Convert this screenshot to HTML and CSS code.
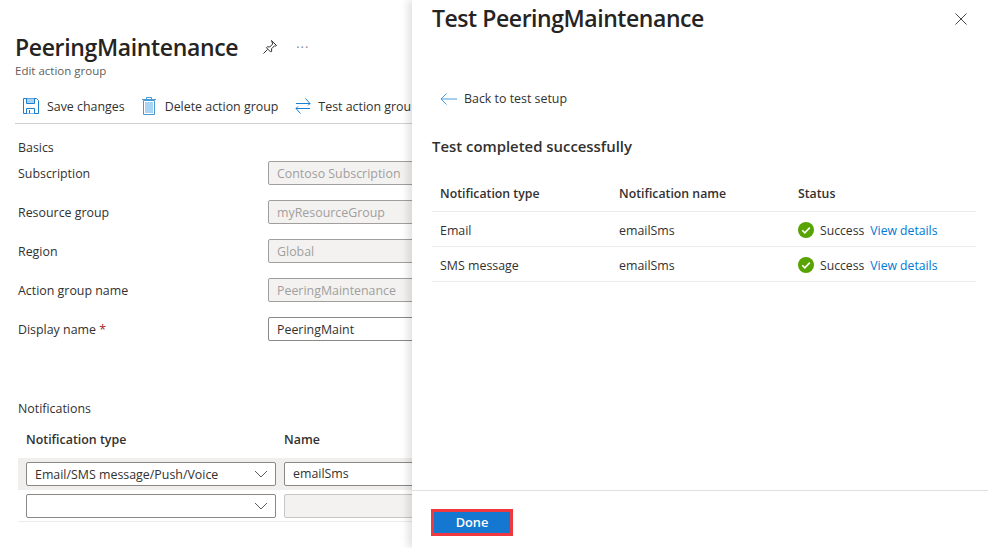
FILE: index.html
```html
<!DOCTYPE html>
<html lang="en">
<head>
  <meta charset="UTF-8" />
  <title>PeeringMaintenance</title>
  <link rel="stylesheet" href="styles.css">
</head>
<body>

<div class="blade">
  <div class="title-row">
    <h1>PeeringMaintenance</h1>
    <svg class="pin" width="16" height="16" viewBox="0 0 16 16" fill="none" stroke="#323130" stroke-width="1"><path d="M9.5 1.5l5 5-1 .6-1-.3-3 3 .2 2.4-.9.9-2.2-2.2-2.2-2.2.9-.9 2.4.2 3-3-.3-1z"/><path d="M5.5 10.500l-4 4"/></svg>
    <span class="more">···</span>
  </div>
  <div class="subtitle">Edit action group</div>

  <div class="toolbar">
    <span class="tool">
      <svg width="16" height="16" viewBox="0 0 16 16" fill="none" stroke="#1a7fd0" stroke-width="1"><path d="M.5.5h13l2 2v13H.5z"/><path d="M3.5.5v5h8v-5" fill="#a9d3f2"/><path d="M3.5 15.5v-5h8v5" fill="#fff"/><path d="M6.500 12v3.500"/></svg>
      Save changes
    </span>
    <span class="tool">
      <svg width="16" height="18" viewBox="0 0 16 18" fill="none" stroke="#4a9ad8" stroke-width="1"><path d="M2.500 3.500h11v14h-11z"/><path d="M4 5h8v11H4z" fill="#a9d3f2" stroke="none"/><path d="M1 2.500h14M5.500 2.500v-2h5v2"/></svg>
      Delete action group
    </span>
    <span class="tool tight">
      <svg width="16" height="16" viewBox="0 0 16 16" fill="none" stroke="#1a7fd0" stroke-width="1"><path d="M1 5.500h14M10.500 .5l4.500 5-2 2M15 10.500H1M5.500 15.500L1 10.500l2-2"/></svg>
      Test action group
    </span>
  </div>

  <div class="form">
    <h2 class="section">Basics</h2>
    <div class="field"><label>Subscription</label><div class="input off">Contoso Subscription</div></div>
    <div class="field"><label>Resource group</label><div class="input off">myResourceGroup</div></div>
    <div class="field"><label>Region</label><div class="input off">Global</div></div>
    <div class="field"><label>Action group name</label><div class="input off">PeeringMaintenance</div></div>
    <div class="field"><label>Display name <span class="req">*</span></label><div class="input">PeeringMaint</div></div>

    <h2 class="section notif">Notifications</h2>
    <div class="notif-head"><span>Notification type</span><span>Name</span></div>
    <div class="notif-row shaded">
      <div class="select">Email/SMS message/Push/Voice
        <svg width="14" height="8" viewBox="0 0 14 8" fill="none" stroke="#605e5c"><path d="M1 1l6 6 6-6"/></svg>
      </div>
      <div class="input wide">emailSms</div>
    </div>
    <div class="notif-row last">
      <div class="select">
        <svg width="14" height="8" viewBox="0 0 14 8" fill="none" stroke="#605e5c"><path d="M1 1l6 6 6-6"/></svg>
      </div>
      <div class="input wide blank"></div>
    </div>
  </div>
</div>

<div class="panel">
  <div class="panel-top">
    <h2>Test PeeringMaintenance</h2>
    <svg class="close" width="12" height="12" viewBox="0 0 12 12" fill="none" stroke="#484644"><path d="M.5.500l11 11M11.500.500l-11 11"/></svg>
  </div>

  <div class="panel-body">
    <div class="back">
      <svg width="17" height="12" viewBox="0 0 17 12" fill="none" stroke="#4a9ad8"><path d="M1 6h16M6.500.500L1 6l5.500 5.500"/></svg>
      Back to test setup
    </div>
    <h3>Test completed successfully</h3>

    <table>
      <thead>
        <tr><th>Notification type</th><th>Notification name</th><th>Status</th></tr>
      </thead>
      <tbody>
        <tr>
          <td>Email</td><td>emailSms</td>
          <td>
            <span class="status">
              <svg width="16" height="16" viewBox="0 0 16 16"><circle cx="8" cy="8" r="8" fill="#57a300"/><path d="M4.200 8.300l2.600 2.600 5-5.300" fill="none" stroke="#fff" stroke-width="1.600"/></svg>
              Success <a>View details</a>
            </span>
          </td>
        </tr>
        <tr>
          <td>SMS message</td><td>emailSms</td>
          <td>
            <span class="status">
              <svg width="16" height="16" viewBox="0 0 16 16"><circle cx="8" cy="8" r="8" fill="#57a300"/><path d="M4.200 8.300l2.600 2.600 5-5.300" fill="none" stroke="#fff" stroke-width="1.600"/></svg>
              Success <a>View details</a>
            </span>
          </td>
        </tr>
      </tbody>
    </table>
  </div>

  <div class="panel-foot">
    <button class="done">Done</button>
  </div>
</div>

</body>
</html>
```

FILE: styles.css
```css
html, body {
  height: 100%;
}

body {
  margin: 0;
  width: 988px;
  height: 548px;
  overflow: hidden;
  position: relative;
  background: #fff;
  color: #323130;
  font-family: "Open Sans", Arial, sans-serif;
  font-size: 12.4px;
}

.blade {
  width: 600px;
  padding: 33px 0 0 15px;
  box-sizing: border-box;
}

.title-row {
  display: flex;
  align-items: center;
  height: 28px;
}

h1 {
  margin: 0;
  font-size: 23px;
  font-weight: 600;
  letter-spacing: -0.35px;
  color: #252423;
}

.pin {
  margin-left: 24px;
}

.more {
  margin-left: 18px;
  color: #8a8886;
  font-size: 13px;
  letter-spacing: 1px;
}

.subtitle {
  margin-top: 2px;
  color: #605e5c;
  font-size: 11.5px;
  line-height: 16px;
}

.toolbar {
  display: flex;
  align-items: center;
  gap: 16px;
  height: 34px;
  margin-top: 8px;
  padding: 2px 0 0 8px;
  border-bottom: 1px solid #d2d0ce;
}

.tool {
  display: flex;
  align-items: center;
  gap: 8px;
  white-space: nowrap;
}

.tool.tight {
  gap: 7px;
  margin-left: 1px;
}

.form {
  padding-left: 3px;
}

.section {
  margin: 0;
  font-size: 12.4px;
  font-weight: 400;
  line-height: 16px;
}

.form > .section:first-child {
  margin-top: 16px;
}

.field {
  display: flex;
  align-items: center;
  height: 24px;
  margin-top: 15px;
}

.section + .field {
  margin-top: 5px;
}

.field label {
  width: 250px;
}

.req {
  color: #a4262c;
}

.input {
  box-sizing: border-box;
  width: 300px;
  height: 24px;
  padding: 0 8px;
  line-height: 24px;
  border: 1px solid #8a8886;
  border-radius: 2px;
  background: #fff;
  white-space: nowrap;
}

.input.off {
  color: #a19f9d;
  background: #f3f2f1;
  border-color: #a19f9d;
}

.section.notif {
  margin-top: 60px;
}

.notif-head {
  display: flex;
  padding-left: 8px;
  margin-top: 15px;
  font-weight: 600;
  line-height: 16px;
}

.notif-head span:first-child {
  width: 258px;
}

.notif-row {
  display: flex;
  align-items: center;
  gap: 8px;
  height: 32px;
  padding-left: 8px;
}

.notif-head + .notif-row {
  margin-top: 10px;
}

.shaded {
  background: #f0efee;
}

.last {
  height: 32px;
  border-bottom: 1px solid #edebe9;
  box-sizing: border-box;
}

.select {
  box-sizing: border-box;
  display: flex;
  align-items: center;
  justify-content: space-between;
  width: 250px;
  height: 24px;
  padding: 0 7px 0 8px;
  background: #fff;
  border: 1px solid #8a8886;
  border-radius: 2px;
  white-space: nowrap;
}

.select svg {
  margin-left: auto;
}

.input.wide {
  width: 250px;
  line-height: 22px;
}

.input.blank {
  background: #f3f2f1;
  border-color: #c8c6c4;
}

/* slides in over the blade */
.panel {
  position: absolute;
  top: 0;
  left: 412px;
  width: 576px;
  height: 548px;
  display: flex;
  flex-direction: column;
  background: #fff;
  box-shadow: -4px 0 8px rgba(0, 0, 0, 0.12);
}

.panel-top {
  display: flex;
  align-items: center;
  justify-content: space-between;
  height: 36px;
  padding: 0 21px 2px 20px;
}

.panel-top svg {
  margin-top: 2px;
}

.panel-top h2 {
  margin: 0;
  font-size: 23px;
  font-weight: 600;
  letter-spacing: -0.44px;
  color: #252423;
}

.panel-body {
  flex: 1;
  padding: 0 12px 0 20px;
}

.back {
  display: flex;
  align-items: center;
  gap: 7px;
  margin: 52px 0 0 8px;
  height: 17px;
}

.panel-body h3 {
  margin: 29px 0 0;
  font-size: 14.9px;
  font-weight: 600;
  line-height: 20px;
}

table {
  width: 100%;
  margin-top: 19px;
  border-collapse: collapse;
}

th, td {
  padding: 0 8px;
  text-align: left;
  border-bottom: 1px solid #edebe9;
  font-weight: 400;
}

th {
  height: 36px;
  font-size: 12.3px;
  font-weight: 600;
}

td {
  height: 32px;
  padding-top: 2px;
}

th:nth-child(1) {
  width: 163px;
}

th:nth-child(2) {
  width: 163px;
}

.status {
  display: flex;
  align-items: center;
  gap: 6px;
  font-size: 12.2px;
}

.status a {
  color: #0078d4;
}

.panel-foot {
  box-sizing: border-box;
  height: 58px;
  padding: 18px 0 0 19px;
  border-top: 1px solid #e1dfdd;
}

.done {
  display: block;
  box-sizing: border-box;
  width: 82px;
  height: 27px;
  padding: 0 0 2px;
  background: #1477d0;
  color: #fff;
  border: 3px solid #f0393f;
  font: 600 12.8px "Open Sans", Arial, sans-serif;
}
```
